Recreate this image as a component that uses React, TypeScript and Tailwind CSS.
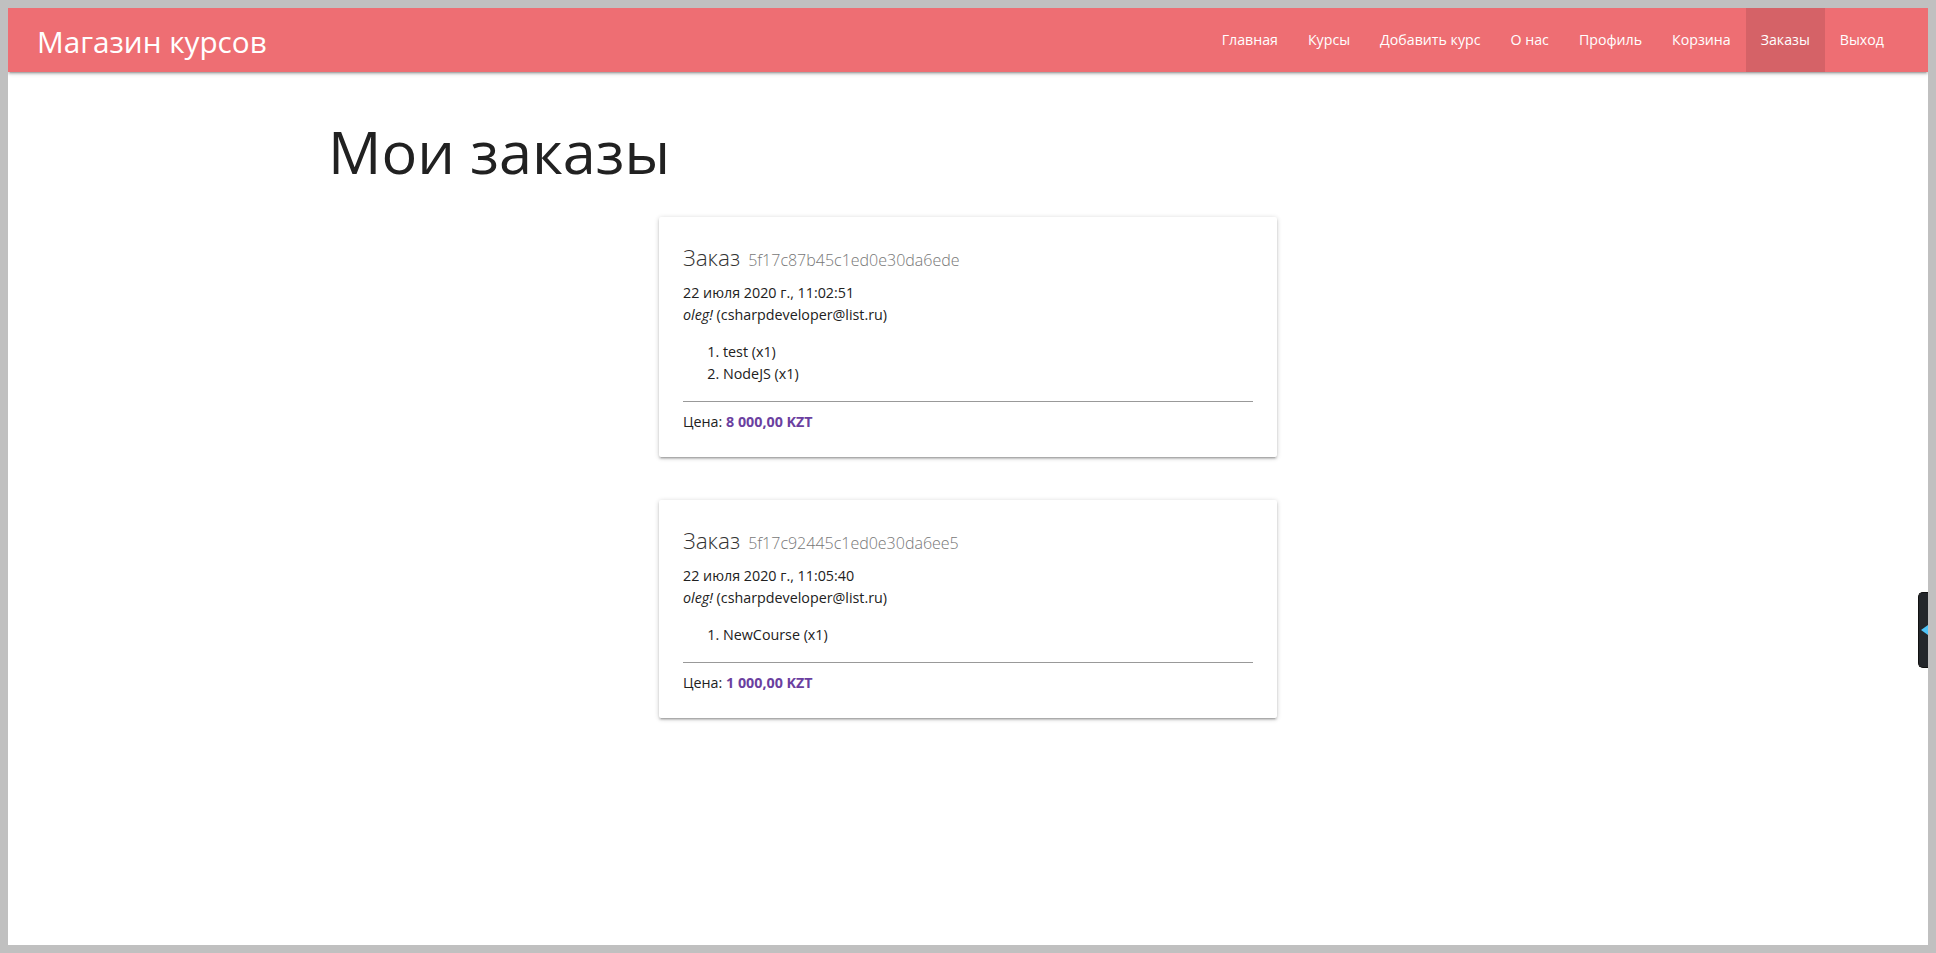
import React from "react";

const font = { fontFamily: '"Open Sans", "Noto Sans", sans-serif' };

const navItems = ["Главная", "Курсы", "Добавить курс", "О нас", "Профиль", "Корзина", "Заказы", "Выход"];

type Order = {
  id: string;
  date: string;
  items: string[];
  price: string;
};

const orders: Order[] = [
  { id: "5f17c87b45c1ed0e30da6ede", date: "22 июля 2020 г., 11:02:51", items: ["test (x1)", "NodeJS (x1)"], price: "8 000,00 KZT" },
  { id: "5f17c92445c1ed0e30da6ee5", date: "22 июля 2020 г., 11:05:40", items: ["NewCourse (x1)"], price: "1 000,00 KZT" },
];

function OrderCard({ o }: { o: Order }) {
  return (
    <div className="w-[618px] rounded-[2px] bg-white p-6 shadow-[0_2px_2px_0_rgba(0,0,0,0.14),0_3px_1px_-2px_rgba(0,0,0,0.12),0_1px_5px_0_rgba(0,0,0,0.2)]">
      <div className="flex items-baseline gap-[8px] leading-[34px]">
        <span className="text-[22.6px] font-light text-[#333]">Заказ</span>
        <span className="text-[16px] font-light text-[#777]">{o.id}</span>
      </div>
      <div className="mt-[5px] text-[14.3px] leading-[22px] text-[#212121]">
        <p>{o.date}</p>
        <p>
          <em>oleg!</em> (csharpdeveloper@list.ru)
        </p>
        <ol className="mt-[15px] mb-[16px] list-decimal pl-[40px]">
          {o.items.map((it) => (
            <li key={it}>{it}</li>
          ))}
        </ol>
        <div className="h-px bg-[#999]" />
        <p className="mt-[9px]">
          Цена: <span className="font-bold text-[#6b3fa0]">{o.price}</span>
        </p>
      </div>
    </div>
  );
}

export default function App() {
  return (
    <div className="min-h-[953px] bg-[#c0c0c0] p-2" style={font}>
      <div className="relative h-[937px] overflow-hidden bg-white">
        <nav className="relative z-10 flex h-16 items-center justify-between bg-[#ee6e73] px-[29px] shadow-[0_2px_2px_0_rgba(0,0,0,0.14),0_3px_1px_-2px_rgba(0,0,0,0.12),0_1px_5px_0_rgba(0,0,0,0.2)]">
          <a className="pt-[3px] text-[29.7px] leading-[64px] text-white">Магазин курсов</a>
          <ul className="flex h-full">
            {navItems.map((n) => (
              <li key={n} className="h-full">
                <a
                  className={
                    "flex h-full items-center px-[15px] text-[14.2px] text-white " +
                    (n === "Заказы" ? "bg-[rgba(0,0,0,0.1)]" : "")
                  }
                >
                  {n}
                </a>
              </li>
            ))}
          </ul>
        </nav>
        <main className="mx-auto w-[1280px]">
          <h1 className="mt-[42px] mb-[29px] text-[59.4px] font-normal leading-[74px] text-[#212121]">Мои заказы</h1>
          <div className="flex flex-col items-center gap-[43px]">
            {orders.map((o) => (
              <OrderCard key={o.id} o={o} />
            ))}
          </div>
        </main>
        <div className="absolute right-0 top-[584px] flex h-[76px] w-[10px] items-center justify-end rounded-l-[5px] border border-r-0 border-[#111] bg-[#24272b]">
          <div className="h-0 w-0 border-y-[5px] border-r-[7px] border-y-transparent border-r-[#4fc3f7]" />
        </div>
      </div>
    </div>
  );
}
